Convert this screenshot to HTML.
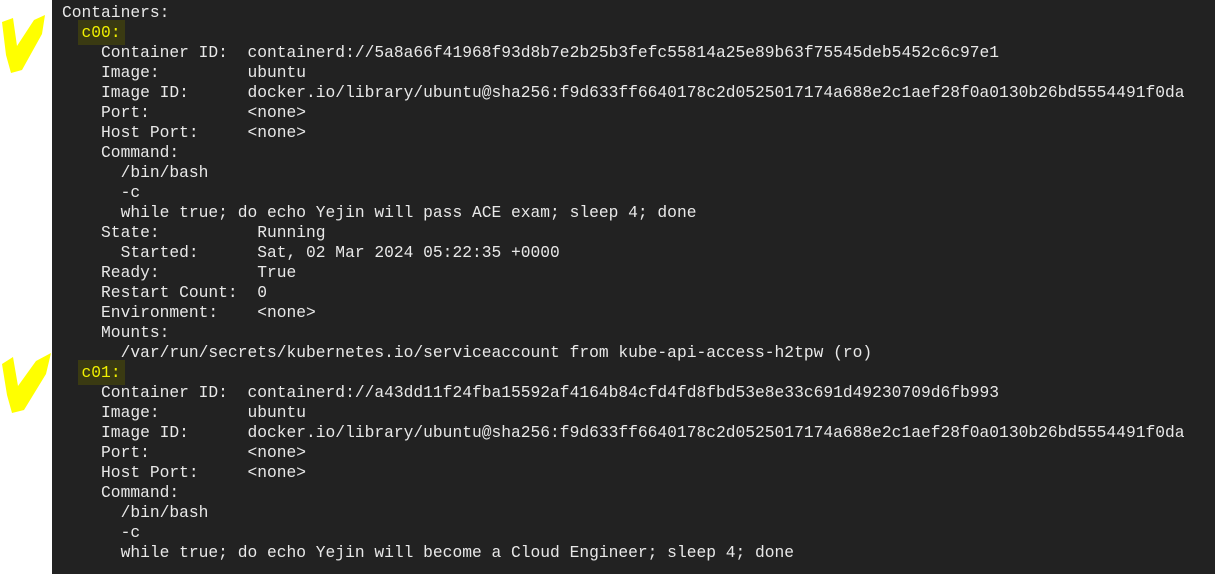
<!DOCTYPE html>
<html><head><style>
html,body{margin:0;padding:0;width:1215px;height:574px;overflow:hidden;background:#fff}
#term{position:absolute;left:52px;top:0;width:1163px;height:574px;background:#222222}
pre{margin:0;position:absolute;left:62px;top:3px;font-family:"Liberation Mono",monospace;font-size:16.28px;line-height:20px;color:#e8e8e8}
.h{background:#3a3a12;color:#f0f000;padding:3px 4px;margin:0 -4px}
</style></head><body>
<div id="term"></div>
<svg style="position:absolute;left:0;top:0" width="52" height="574">
<path d="M2,22 L13,18 L17,46 L34,20 L45,15 L42,34 L22,70 L11,73 L6,55 Z" fill="#ffff00"/>
<path d="M2,364 L13,357 L18,386 L36,361 L51,353 L46,374 L24,410 L12,413 L7,395 Z" fill="#ffff00"/>
</svg>
<pre>Containers:
  <span class="h">c00:</span>
    Container ID:  containerd://5a8a66f41968f93d8b7e2b25b3fefc55814a25e89b63f75545deb5452c6c97e1
    Image:         ubuntu
    Image ID:      docker.io/library/ubuntu@sha256:f9d633ff6640178c2d0525017174a688e2c1aef28f0a0130b26bd5554491f0da
    Port:          &lt;none&gt;
    Host Port:     &lt;none&gt;
    Command:
      /bin/bash
      -c
      while true; do echo Yejin will pass ACE exam; sleep 4; done
    State:          Running
      Started:      Sat, 02 Mar 2024 05:22:35 +0000
    Ready:          True
    Restart Count:  0
    Environment:    &lt;none&gt;
    Mounts:
      /var/run/secrets/kubernetes.io/serviceaccount from kube-api-access-h2tpw (ro)
  <span class="h">c01:</span>
    Container ID:  containerd://a43dd11f24fba15592af4164b84cfd4fd8fbd53e8e33c691d49230709d6fb993
    Image:         ubuntu
    Image ID:      docker.io/library/ubuntu@sha256:f9d633ff6640178c2d0525017174a688e2c1aef28f0a0130b26bd5554491f0da
    Port:          &lt;none&gt;
    Host Port:     &lt;none&gt;
    Command:
      /bin/bash
      -c
      while true; do echo Yejin will become a Cloud Engineer; sleep 4; done
</pre>
</body></html>
